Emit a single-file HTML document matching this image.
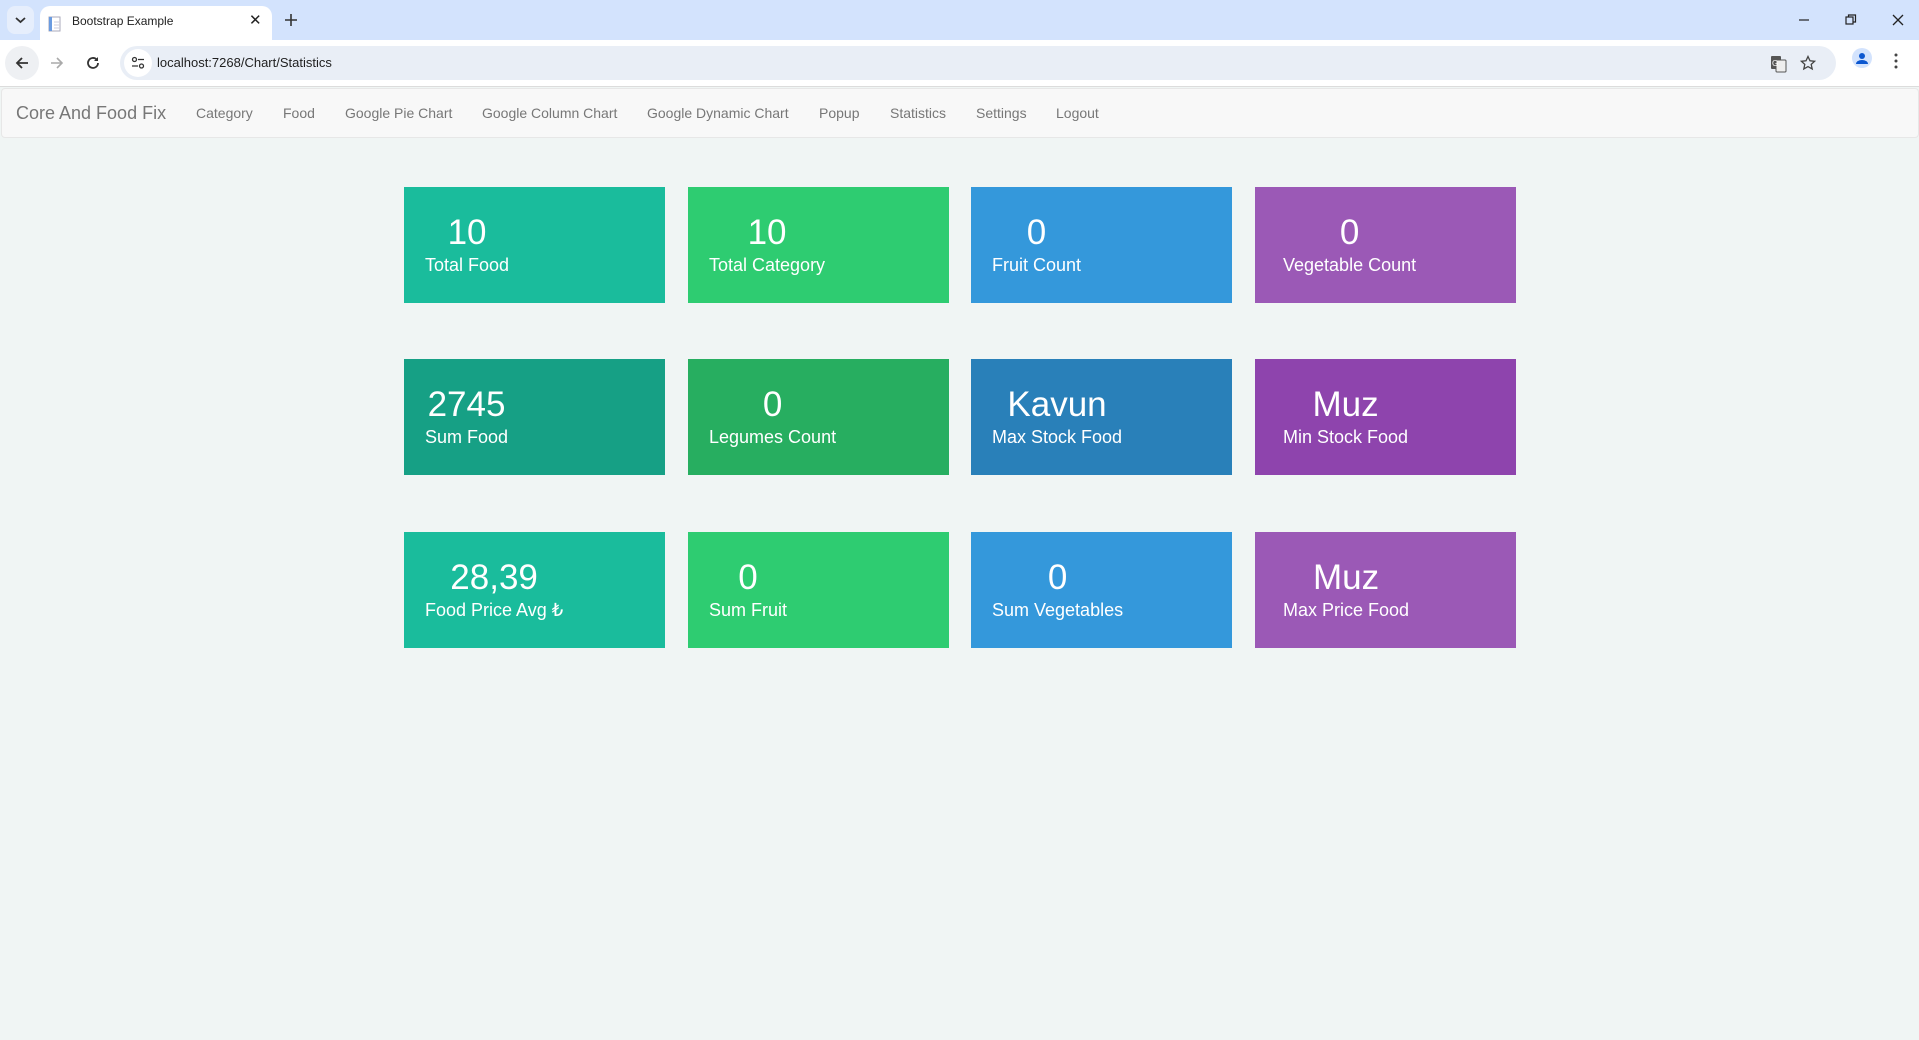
<!DOCTYPE html>
<html><head><meta charset="utf-8"><style>
*{margin:0;padding:0;box-sizing:border-box}
html,body{width:1919px;height:1040px;overflow:hidden}
body{background:#f0f5f4;font-family:"Liberation Sans",Arial,sans-serif;position:relative}
.tabstrip{position:absolute;left:0;top:0;width:1919px;height:40px;background:#d3e3fd}
.tabdd{position:absolute;left:7px;top:6px;width:27px;height:28px;border-radius:8px;background:#e6eefc}
.tab{position:absolute;left:40px;top:6px;width:232px;height:36px;background:#fff;border-radius:10px 10px 0 0}
.tab .t{position:absolute;left:32px;top:8px;font-size:12px;color:#222}
.tab .x{position:absolute;left:209px;top:5px;font-size:15px;color:#222}
.toolbar{position:absolute;left:0;top:40px;width:1919px;height:46px;background:#fff}
.omni{position:absolute;left:120px;top:6px;width:1716px;height:34px;background:#e9eef6;border-radius:17px}
.omni .u{position:absolute;left:37px;top:9px;font-size:13px;color:#1f1f1f}
.navbar{position:absolute;left:1px;top:88px;width:1918px;height:50px;background:#f8f8f8;border:1px solid #e7e7e7;border-radius:4px}
.nav{position:absolute;top:0;line-height:48px;font-size:14px;color:#777}
.brand{position:absolute;left:14px;top:0;line-height:49px;font-size:18px;color:#777}
.card{position:absolute;width:261px;height:116px;color:#fff}
.in{position:absolute;left:21px;top:26px;display:inline-block;text-align:center}
.c4 .in{left:28px}
.n{font-size:35px;line-height:40px;white-space:nowrap}
.l{font-size:18px;line-height:20px;margin-top:2px;white-space:nowrap}
</style></head><body>
<div class="tabstrip">
 <div class="tabdd"><svg width="27" height="28"><path d="M9 12l4.5 4 4.5-4" stroke="#333" stroke-width="1.8" fill="none"/></svg></div>
 <div class="tab">
  <svg style="position:absolute;left:8px;top:10px" width="14" height="16"><rect x="1" y="1" width="11" height="14" fill="#fff" stroke="#aab" /><rect x="1" y="1" width="3" height="14" fill="#6a9be0"/><path d="M6 6h5M6 9h5M6 12h5" stroke="#ccd"/></svg>
  <span class="t">Bootstrap Example</span><span class="x">✕</span></div>
 <svg style="position:absolute;left:284px;top:13px" width="14" height="14"><path d="M7 1v12M1 7h12" stroke="#333" stroke-width="1.6"/></svg>
 <svg style="position:absolute;left:1798px;top:14px" width="12" height="12"><path d="M1 6h10" stroke="#222" stroke-width="1.2"/></svg>
 <svg style="position:absolute;left:1845px;top:14px" width="12" height="12"><rect x="1" y="3" width="7" height="7" fill="none" stroke="#222" stroke-width="1.2"/><path d="M3.5 3V1h7v7H8" fill="none" stroke="#222" stroke-width="1.2"/></svg>
 <svg style="position:absolute;left:1892px;top:14px" width="12" height="12"><path d="M1 1l10 10M11 1L1 11" stroke="#222" stroke-width="1.3"/></svg>
</div>
<div class="toolbar">
 <div style="position:absolute;left:5px;top:6px;width:34px;height:34px;border-radius:17px;background:#eef0f3"></div>
 <svg style="position:absolute;left:14px;top:15px" width="16" height="16"><path d="M14 8H3M8 3L3 8l5 5" stroke="#333" stroke-width="1.8" fill="none"/></svg>
 <svg style="position:absolute;left:49px;top:15px" width="16" height="16"><path d="M2 8h11M8 3l5 5-5 5" stroke="#aaa" stroke-width="1.6" fill="none"/></svg>
 <svg style="position:absolute;left:85px;top:15px" width="16" height="16"><path d="M13 8a5 5 0 1 1-1.5-3.6" stroke="#333" stroke-width="1.8" fill="none"/><path d="M13 2v4h-4z" fill="#333"/></svg>
 <div class="omni">
  <div style="position:absolute;left:4px;top:3px;width:28px;height:28px;border-radius:14px;background:#fff"></div>
  <svg style="position:absolute;left:11px;top:10px" width="14" height="14"><circle cx="3.5" cy="3.5" r="2" fill="none" stroke="#333" stroke-width="1.3"/><path d="M7 3.5h6M1 10h6" stroke="#333" stroke-width="1.3"/><circle cx="10.5" cy="10" r="2" fill="none" stroke="#333" stroke-width="1.3"/></svg>
  <span class="u">localhost:7268/Chart/Statistics</span>
  <svg style="position:absolute;left:1650px;top:9px" width="18" height="18"><rect x="1" y="1" width="10" height="13" rx="1" fill="#555"/><rect x="6" y="5" width="10" height="12" rx="1" fill="#eee" stroke="#555"/><text x="2" y="11" font-size="8" fill="#fff" font-family="Liberation Sans">G</text></svg>
  <svg style="position:absolute;left:1680px;top:9px" width="16" height="16"><path d="M8 1.5l2 4.3 4.6.5-3.4 3.1 1 4.6L8 11.6 3.8 14l1-4.6L1.4 6.3 6 5.8z" fill="none" stroke="#444" stroke-width="1.3"/></svg>
 </div>
 <div style="position:absolute;left:1852px;top:8px;width:20px;height:20px;border-radius:10px;background:#d3e3fd"></div>
 <svg style="position:absolute;left:1852px;top:8px" width="20" height="20"><circle cx="10" cy="8" r="3" fill="#0b57d0"/><path d="M4 16a6 4 0 0 1 12 0z" fill="#0b57d0"/></svg>
 <svg style="position:absolute;left:1894px;top:13px" width="4" height="16"><circle cx="2" cy="2" r="1.5" fill="#444"/><circle cx="2" cy="8" r="1.5" fill="#444"/><circle cx="2" cy="14" r="1.5" fill="#444"/></svg>
</div>
<div style="position:absolute;left:0;top:86px;width:1919px;height:1px;background:#dcdcdc"></div>
<div class="navbar">
 <span class="brand">Core And Food Fix</span>
 <span class="nav" style="left:194px">Category</span>
 <span class="nav" style="left:281px">Food</span>
 <span class="nav" style="left:343px">Google Pie Chart</span>
 <span class="nav" style="left:480px">Google Column Chart</span>
 <span class="nav" style="left:645px">Google Dynamic Chart</span>
 <span class="nav" style="left:817px">Popup</span>
 <span class="nav" style="left:888px">Statistics</span>
 <span class="nav" style="left:974px">Settings</span>
 <span class="nav" style="left:1054px">Logout</span>
</div>

<div class="card" style="left:404px;top:187px;background:#1abc9c"><div class="in"><div class="n">10</div><div class="l">Total Food</div></div></div>
<div class="card" style="left:688px;top:187px;background:#2ecc71"><div class="in"><div class="n">10</div><div class="l">Total Category</div></div></div>
<div class="card" style="left:971px;top:187px;background:#3498db"><div class="in"><div class="n">0</div><div class="l">Fruit Count</div></div></div>
<div class="card c4" style="left:1255px;top:187px;background:#9b59b6"><div class="in"><div class="n">0</div><div class="l">Vegetable Count</div></div></div>

<div class="card" style="left:404px;top:359px;background:#16a085"><div class="in"><div class="n">2745</div><div class="l">Sum Food</div></div></div>
<div class="card" style="left:688px;top:359px;background:#27ae60"><div class="in"><div class="n">0</div><div class="l">Legumes Count</div></div></div>
<div class="card" style="left:971px;top:359px;background:#2980b9"><div class="in"><div class="n">Kavun</div><div class="l">Max Stock Food</div></div></div>
<div class="card c4" style="left:1255px;top:359px;background:#8e44ad"><div class="in"><div class="n">Muz</div><div class="l">Min Stock Food</div></div></div>

<div class="card" style="left:404px;top:532px;background:#1abc9c"><div class="in"><div class="n">28,39</div><div class="l">Food Price Avg ₺</div></div></div>
<div class="card" style="left:688px;top:532px;background:#2ecc71"><div class="in"><div class="n">0</div><div class="l">Sum Fruit</div></div></div>
<div class="card" style="left:971px;top:532px;background:#3498db"><div class="in"><div class="n">0</div><div class="l">Sum Vegetables</div></div></div>
<div class="card c4" style="left:1255px;top:532px;background:#9b59b6"><div class="in"><div class="n">Muz</div><div class="l">Max Price Food</div></div></div>
</body></html>
